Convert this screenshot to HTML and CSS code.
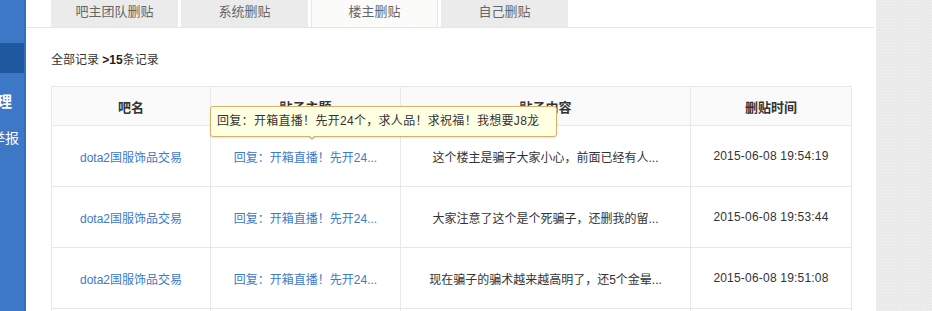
FILE: index.html
```html
<!DOCTYPE html>
<html>
<head>
  <title>楼主删贴</title>
  <meta name="viewport" content="width=device-width,initial-scale=1">
  <link rel="stylesheet" href="styles.css">
</head>
<body>
  <div class="sidebar">
    <div class="nav-current"></div>
    <div class="nav-title">吧务管理</div>
    <div class="nav-item">投诉举报</div>
  </div>

  <div class="main">
    <ul class="tabs">
      <li class="tab">吧主团队删贴</li>
      <li class="tab">系统删贴</li>
      <li class="tab tab-active">楼主删贴</li>
      <li class="tab">自己删贴</li>
    </ul>

    <div class="crumb">全部记录 <b>&gt;15</b>条记录</div>

    <div class="table-wrap">
      <table class="records">
        <thead>
          <tr>
            <th class="col-bar">吧名</th>
            <th class="col-title">贴子主题</th>
            <th class="col-content">贴子内容</th>
            <th class="col-time">删贴时间</th>
          </tr>
        </thead>
        <tbody>
          <tr>
            <td><a href="#">dota2国服饰品交易</a></td>
            <td><a href="#">回复：开箱直播！先开24...</a></td>
            <td>这个楼主是骗子大家小心，前面已经有人...</td>
            <td class="time">2015-06-08 19:54:19</td>
          </tr>
          <tr>
            <td><a href="#">dota2国服饰品交易</a></td>
            <td><a href="#">回复：开箱直播！先开24...</a></td>
            <td>大家注意了这个是个死骗子，还删我的留...</td>
            <td class="time">2015-06-08 19:53:44</td>
          </tr>
          <tr>
            <td><a href="#">dota2国服饰品交易</a></td>
            <td><a href="#">回复：开箱直播！先开24...</a></td>
            <td>现在骗子的骗术越来越高明了，还5个金晕...</td>
            <td class="time">2015-06-08 19:51:08</td>
          </tr>
          <tr>
            <td><a href="#">dota2国服饰品交易</a></td>
            <td><a href="#">回复：开箱直播！先开24...</a></td>
            <td>楼主骗子</td>
            <td class="time">2015-06-08 19:50:12</td>
          </tr>
        </tbody>
      </table>

      <div class="tip">回复：开箱直播！先开24个，求人品！求祝福！我想要J8龙</div>
    </div>
  </div>

  <div class="aside"></div>
</body>
</html>
```

FILE: styles.css
```css
html,
body {
  height: 100%;
}

body {
  margin: 0;
  display: flex;
  overflow: hidden;

  font-family: 'Liberation Sans', 'Noto Sans CJK SC', sans-serif;
  font-size: 12px;
  color: #333;
  background: #fff;
}

/* left nav, mostly scrolled out of view */
.sidebar {
  width: 24px;
  flex: none;
  overflow: hidden;
  padding-top: 43px;

  background: #3c78c6;
  border-right: 2px solid #346fbc;
  color: #fff;
}

.nav-current {
  height: 30px;
  margin-right: -2px;
  background: #1f589f;
}

.nav-title,
.nav-item {
  height: 36px;
  line-height: 36px;
  white-space: nowrap;
  direction: rtl;
}

.nav-title {
  margin-top: 11px;
  padding-right: 12px;
  font-size: 15px;
  font-weight: bold;
}

.nav-item {
  padding-right: 5px;
  font-size: 14px;
}

.main {
  width: 850px;
  flex: none;
  background: #fff;
}

.aside {
  flex: 1;
  background-color: #eaeaea;
  background-image: radial-gradient(rgba(255, 255, 255, 0.35) 1px, transparent 1px);
  background-size: 3px 3px;
}

.tabs {
  display: flex;
  gap: 3px;
  margin: -3px 2px 0 0;
  padding: 0 0 0 25px;
  list-style: none;
  border-bottom: 1px solid #e6e6e6;
}

.tab {
  width: 127px;
  height: 30px;
  box-sizing: border-box;

  line-height: 30px;
  text-align: center;
  font-size: 13px;
  color: #666;
  background: #ebebeb;
}

.tab-active {
  background: #fbfbf9;
  border-left: 1px solid #e6e6e6;
  border-right: 1px solid #e6e6e6;
}

.crumb {
  margin: 22px 0 0 25px;
  line-height: 20px;
  font-size: 12px;
  color: #333;
}

.crumb b {
  color: #222;
}

.table-wrap {
  position: relative;
  margin: 16px 0 0 25px;
  width: 800px;
}

.records {
  width: 800px;
  border-collapse: collapse;
  table-layout: fixed;
}

.records th,
.records td {
  border: 1px solid #e8e8e8;
  text-align: center;
  padding: 0;
  white-space: nowrap;
  overflow: hidden;
}

.records th {
  height: 38px;
  font-size: 13px;
  font-weight: bold;
  color: #333;
  background: #fafafa;
}

.records td {
  height: 60px;
  color: #333;
}

.records a {
  color: #3d7ac8;
  text-decoration: none;
}

.records .time {
  letter-spacing: 0.2px;
}

.col-bar {
  width: 158px;
}

.col-title {
  width: 189px;
}

.col-content {
  width: 289px;
}

.col-time {
  width: 160px;
}

/* hover tooltip for the full title */
.tip {
  position: absolute;
  left: 159px;
  top: 20px;
  width: 347px;
  height: 31px;
  box-sizing: border-box;
  padding: 0 0 0 6px;

  line-height: 29px;
  font-size: 12px;
  letter-spacing: 0.3px;
  white-space: nowrap;
  color: #333;
  background: #ffffe2;
  border: 1px solid #d6b06e;
  border-radius: 3px;
  box-shadow: 0 1px 2px rgba(0, 0, 0, 0.12);
}

.tip:before,
.tip:after {
  content: '';
  position: absolute;
  left: 97px;
  width: 0;
  height: 0;
  border-style: solid;
  border-color: transparent;
}

.tip:before {
  top: 29px;
  border-width: 4px 4px 0 4px;
  border-top-color: #d6b06e;
}

.tip:after {
  top: 28px;
  left: 98px;
  border-width: 3px 3px 0 3px;
  border-top-color: #ffffe2;
}
```
